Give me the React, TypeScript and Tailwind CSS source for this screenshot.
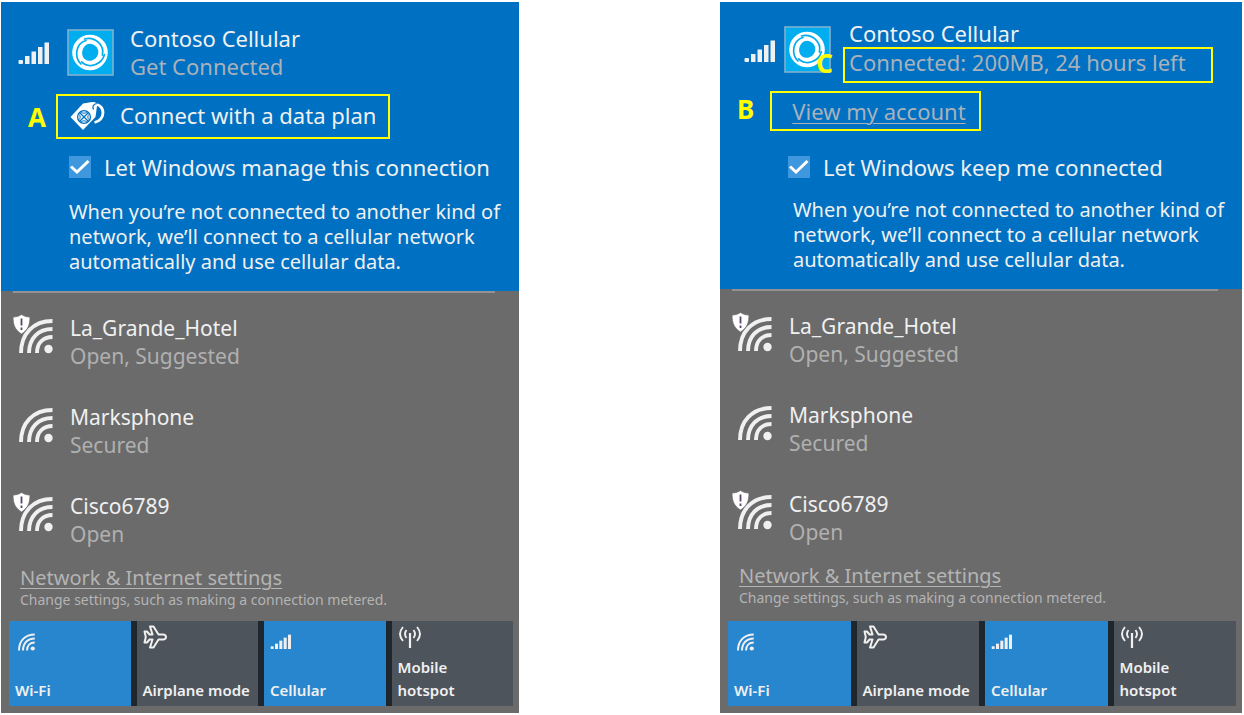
import React from "react";

function SignalBars({ className }: { className?: string }) {
  return (
    <svg viewBox="0 -2 32 24" className={className} fill="currentColor" aria-hidden="true">
      <rect x="0.5" y="18" width="4.500" height="4" rx="1" />
      <rect x="7" y="14" width="4.500" height="8" />
      <rect x="13.5" y="9.500" width="4.500" height="12.500" />
      <rect x="20" y="5" width="4.500" height="17" />
      <rect x="26.500" y="0.500" width="4.500" height="21.500" />
    </svg>
  );
}

function WifiArcs({ shield = false, className }: { shield?: boolean; className?: string }) {
  return (
    <svg viewBox="0 0 40 40" className={className} aria-hidden="true">
      <g fill="none" stroke="currentColor" strokeWidth="3.900">
        <path d="M8 39C8 20 20 7 39.500 7" />
        <path d="M16 39C16 24.500 25 15 39.500 15" />
        <path d="M24 39C24 29 30 23 39.500 23" />
      </g>
      <circle cx="35.500" cy="35" r="4.200" fill="currentColor" />
      {shield && (
        <g>
          <path d="M0 3C3 3 6 2.200 8.500 0.500C11 2.200 14 3 17 3C17 11 15 16 8.500 20C2 16 0 11 0 3Z" fill="#fff" stroke="#6b6b6b" strokeWidth="0.800" />
          <path d="M8.500 4.500V11.500M8.500 13.500V16" stroke="#5a4668" strokeWidth="1.800" />
        </g>
      )}
    </svg>
  );
}

function CarrierLogo() {
  return (
    <svg viewBox="0 0 47 47" className="size-[47px] shrink-0" role="img" aria-label="Contoso logo">
      <rect x="1" y="1" width="45" height="45" fill="#00adef" stroke="#7fb0d0" strokeWidth="1.600" />
      <g transform="translate(23 23.500)">
        <circle r="17.800" fill="#fff" />
        <path d="M-2 -8.500C3 -10 8 -5.500 8.300 -1C8.500 4.500 4 8.500 -1 8.300C-5.500 8 -8.500 4 -7.800 -1C-7 -5 -5 -7.500 -2 -8.500Z" fill="#00adef" />
        {[0, 120, 240].map((a) => (
          <path
            key={a}
            transform={"rotate(" + a + ")"}
            d="M-9 11.500C-16.500 4 -14 -9 -4 -12"
            fill="none"
            stroke="#00adef"
            strokeWidth="1.700"
            strokeLinecap="round"
          />
        ))}
        {[0, 120, 240].map((a) => (
          <path
            key={a}
            transform={"rotate(" + a + ")"}
            d="M-11 -2C-9.500 -7 -6 -10.500 0 -9.500"
            fill="none"
            stroke="#fff"
            strokeWidth="1.600"
          />
        ))}
      </g>
    </svg>
  );
}

function TagIcon() {
  return (
    <svg viewBox="0 0 36 30" className="h-[30px] w-9 shrink-0" aria-hidden="true">
      <path d="M0.500 16L13 2.500L22 1Q27.500 0.500 27 5L25.500 16L13 29Z" fill="#fff" />
      <g fill="none" stroke="#0070c2" strokeWidth="1.300">
        <circle cx="14" cy="16" r="6.400" />
        <path d="M9.500 11.500L18.500 20.500M9.500 20.500L18.500 11.500" />
        <path d="M10.500 10.500Q14 14 17.500 10.500M10.500 21.500Q14 18 17.500 21.500M8.500 13Q12 16 8.500 19M19.500 13Q16 16 19.500 19" strokeWidth="1" />
        <path d="M26.500 2.500Q21.500 4 23.500 8.500" />
      </g>
      <path d="M27 3.500Q33 5.500 33 12Q32.500 19.500 24.500 21.500" fill="none" stroke="#fff" strokeWidth="2.800" />
    </svg>
  );
}

function PlaneIcon() {
  return (
    <svg viewBox="0 0 24 24" className="size-6" fill="none" stroke="currentColor" strokeWidth="2" strokeLinejoin="round" aria-hidden="true">
      <path d="M1.500 6.500H4L6.500 9.500H9.500L7 1.500H10.500L15.500 9.500H20.500Q23 10 23 12Q23 14 20.500 14.500H15.500L10.500 22.500H7L9.500 14.500H6.500L4 17.500H1.500L2.800 12Z" />
    </svg>
  );
}

function HotspotIcon() {
  return (
    <svg viewBox="0 0 24 24" className="size-6" fill="none" stroke="currentColor" strokeWidth="1.900" aria-hidden="true">
      <path d="M12 8V23" strokeWidth="2.200" />
      <path d="M8.500 5Q5.500 9 8.500 13M15.500 5Q18.500 9 15.500 13M5 2Q-1 9 5 16M19 2Q25 9 19 16" />
    </svg>
  );
}

function Marker({ children }: { children: string }) {
  return <span className="block text-[26px] leading-7 font-bold text-[#ffff00]">{children}</span>;
}

function ManageOption({ id, label, className }: { id: string; label: string; className: string }) {
  return (
    <div className={"flex items-center gap-[13px] " + className}>
      <span className="grid size-[22px] shrink-0">
        <input id={id} type="checkbox" defaultChecked className="peer [grid-area:1/1] size-[22px] appearance-none bg-[#3f98de]" />
        <svg viewBox="0 0 22 22" className="pointer-events-none invisible [grid-area:1/1] size-[22px] peer-checked:visible" fill="none" stroke="#fff" strokeWidth="3" aria-hidden="true">
          <path d="M2 10.500L8 16L19.500 5" />
        </svg>
      </span>
      <label htmlFor={id} className="text-[22px] leading-7 whitespace-nowrap">{label}</label>
    </div>
  );
}

function Explanation({ className }: { className: string }) {
  return (
    <p className={"text-[20px] leading-[25px] whitespace-nowrap " + className}>
      When you’re not connected to another kind of
      <br />
      network, we’ll connect to a cellular network
      <br />
      automatically and use cellular data.
    </p>
  );
}

const networks = [
  { name: "La_Grande_Hotel", status: "Open, Suggested", shield: true },
  { name: "Marksphone", status: "Secured", shield: false },
  { name: "Cisco6789", status: "Open", shield: true },
];

const tiles = [
  { label: "Wi-Fi", on: true, icon: <WifiArcs className="mt-1.5 size-5" /> },
  { label: "Airplane mode", on: false, icon: <PlaneIcon /> },
  { label: "Cellular", on: true, icon: <SignalBars className="mt-2 h-4 w-[22px]" /> },
  { label: "Mobile hotspot", on: false, icon: <HotspotIcon /> },
];

function NetworkSection() {
  return (
    <>
      <div className="mr-6 ml-3 h-0.5 bg-[#929292]" />
      <ul className="mt-[21px] flex flex-col gap-[33px] pl-3">
        {networks.map((n) => (
          <li key={n.name} className="flex gap-4">
            <WifiArcs shield={n.shield} className="size-10 shrink-0" />
            <div className="pl-px text-[21px] leading-7">
              <h3>{n.name}</h3>
              <p className="text-[#b0b0b0]">{n.status}</p>
            </div>
          </li>
        ))}
      </ul>
      <div className="mt-4 pl-[19px] text-[#b4b4b4]">
        <a href="#settings" className="block w-max text-[20px] leading-7 underline decoration-1 underline-offset-3">Network &amp; Internet settings</a>
        <p className="text-[14px] leading-4">Change settings, such as making a connection metered.</p>
      </div>
      <div className="mt-auto pt-[13px] pr-1.5 pb-[7px] pl-2">
        <div className="grid grid-cols-4 gap-1.5 bg-[#1f262e]">
          {tiles.map((t) => (
            <button
              key={t.label}
              type="button"
              className={
                "flex h-[85px] flex-col items-start justify-between pt-1 pb-1 pl-1.5 text-left text-[15px] leading-[23px] font-semibold text-[#f0f0f0] " +
                (t.on ? "bg-[#2886cf]" : "bg-[#4e545c]")
              }
            >
              {t.icon}
              <span className={t.label === "Mobile hotspot" ? "w-20" : "whitespace-nowrap"}>{t.label}</span>
            </button>
          ))}
        </div>
      </div>
    </>
  );
}

function OfferPanel() {
  return (
    <section className="flex flex-col bg-[#6b6b6b]">
      <div className="h-[289px] bg-[#0070c2] pt-[22px]">
        <div className="flex items-center pl-[17px]">
          <SignalBars className="h-6 w-8 shrink-0" />
          <div className="pr-4 pl-[17px]"><CarrierLogo /></div>
          <div className="text-[22px] leading-7">
            <h2>Contoso Cellular</h2>
            <p className="text-[#a9b1bb]">Get Connected</p>
          </div>
        </div>
        <div className="mt-3.5 flex items-center gap-2.5 pl-[27px]">
          <Marker>A</Marker>
          <button type="button" className="flex h-[45px] w-[334px] items-center gap-3.5 border-2 border-[#ffff00] pb-0.5 pl-3 text-[22px] whitespace-nowrap">
            <TagIcon />
            Connect with a data plan
          </button>
        </div>
        <ManageOption id="manage" label="Let Windows manage this connection" className="mt-3.5 pl-[68px]" />
        <Explanation className="mt-[18px] pl-[68px]" />
      </div>
      <NetworkSection />
    </section>
  );
}

function ConnectedPanel() {
  return (
    <section className="flex flex-col bg-[#6b6b6b]">
      <div className="h-[287px] bg-[#0070c2] pt-[18px]">
        <div className="flex items-start pl-6">
          <div className="flex items-center gap-2 pt-1.5">
            <SignalBars className="h-6 w-8 shrink-0" />
            <div className="relative">
              <CarrierLogo />
              <span className="absolute -right-0.5 -bottom-1"><Marker>C</Marker></span>
            </div>
          </div>
          <div className="ml-3 text-[22px] leading-[27px]">
            <h2 className="pl-1.5">Contoso Cellular</h2>
            <p className="flex h-9 w-[370px] items-center border-2 border-[#ffff00] pb-1.5 pl-1 whitespace-nowrap text-[#a9b1bb]">Connected: 200MB, 24 hours left</p>
          </div>
        </div>
        <div className="mt-2 flex items-start gap-4 pl-[17px]">
          <div className="pt-1"><Marker>B</Marker></div>
          <div className="flex h-10 w-[211px] items-center border-2 border-[#ffff00] pl-5">
            <a href="#account" className="text-[22px] leading-7 whitespace-nowrap text-[#a9b1bb] underline decoration-1 underline-offset-3">View my account</a>
          </div>
        </div>
        <ManageOption id="keep" label="Let Windows keep me connected" className="mt-[22px] pl-[68px]" />
        <Explanation className="mt-4 pl-[73px]" />
      </div>
      <NetworkSection />
    </section>
  );
}

export default function App() {
  return (
    <div className="min-h-screen bg-white">
      <main className="grid grid-cols-[518fr_522fr] gap-x-[201px] pt-0.5 pr-0.5 pl-px font-['Noto_Sans',sans-serif] text-[#f0f0f0]">
        <OfferPanel />
        <ConnectedPanel />
      </main>
    </div>
  );
}
